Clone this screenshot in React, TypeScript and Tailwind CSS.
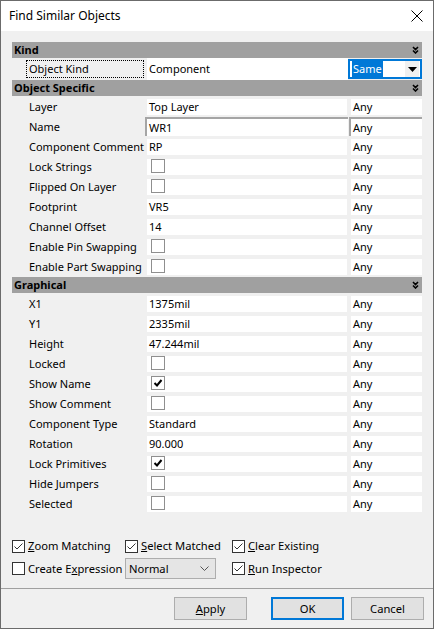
import React from 'react';

const font = { fontFamily: '"Noto Sans", "Open Sans", sans-serif' };

const Chevrons = () => (
  <svg width="7" height="8" viewBox="0 0 7 8" className="mr-[3px]">
    <path d="M1 1 L3.5 3.5 L6 1 M1 4.5 L3.5 7 L6 4.5" stroke="#000" strokeWidth="1.6" fill="none" />
  </svg>
);

const Header = ({ title, className = '' }: { title: string; className?: string }) => (
  <div className={`flex h-[16px] items-center justify-between bg-[#a0a0a0] pl-[2px] ${className}`}>
    <span className="text-[11px] font-bold leading-[16px] text-black">{title}</span>
    <Chevrons />
  </div>
);

const GridCheck = ({ checked }: { checked?: boolean }) => (
  <div className="ml-[2px] flex h-[14px] w-[14px] items-center justify-center border border-[#8f8f8f] bg-white">
    {checked && (
      <svg width="10" height="10" viewBox="0 0 10 10">
        <path d="M1.5 5 L4 7.5 L8.5 2" stroke="#000" strokeWidth="2" fill="none" />
      </svg>
    )}
  </div>
);

type Row = { label: string; value?: string; check?: boolean; checked?: boolean; sunken?: boolean };

const PropRow = ({ r }: { r: Row }) => {
  if (r.sunken) {
    return (
      <div className="flex h-[20px] pt-[1px] text-[11px] leading-[16px]">
        <div className="w-[133px] pl-[17px] pt-[2px]">{r.label}</div>
        <div className="flex h-[19px] w-[203px] items-center border-l-2 border-t-2 border-[#a5a5a5] bg-white pl-[2px]">{r.value}</div>
        <div className="ml-[1px] flex h-[19px] w-[73px] items-center border-l-2 border-t-2 border-[#a5a5a5] bg-white pl-[2px]">Any</div>
      </div>
    );
  }
  return (
    <div className="flex h-[20px] pt-[3px] pb-[1px] text-[11px] leading-[16px]">
      <div className="w-[135px] pl-[17px]">{r.label}</div>
      <div className="w-[200px] bg-white pl-[2px]">
        {r.check ? <GridCheck checked={r.checked} /> : r.value}
      </div>
      <div className="ml-[4px] w-[71px] bg-white pl-[2px]">Any</div>
    </div>
  );
};

const objectSpecific: Row[] = [
  { label: 'Layer', value: 'Top Layer' },
  { label: 'Name', value: 'WR1', sunken: true },
  { label: 'Component Comment', value: 'RP' },
  { label: 'Lock Strings', check: true },
  { label: 'Flipped On Layer', check: true },
  { label: 'Footprint', value: 'VR5' },
  { label: 'Channel Offset', value: '14' },
  { label: 'Enable Pin Swapping', check: true },
  { label: 'Enable Part Swapping', check: true },
];

const graphical: Row[] = [
  { label: 'X1', value: '1375mil' },
  { label: 'Y1', value: '2335mil' },
  { label: 'Height', value: '47.244mil' },
  { label: 'Locked', check: true },
  { label: 'Show Name', check: true, checked: true },
  { label: 'Show Comment', check: true },
  { label: 'Component Type', value: 'Standard' },
  { label: 'Rotation', value: '90.000' },
  { label: 'Lock Primitives', check: true, checked: true },
  { label: 'Hide Jumpers', check: true },
  { label: 'Selected', check: true },
];

const OptCheck = ({ checked, children }: { checked?: boolean; children: React.ReactNode }) => (
  <div className="flex items-center text-[11.2px] leading-[16px]">
    <div className="flex h-[13px] w-[13px] items-center justify-center border border-[#333] bg-white">
      {checked && (
        <svg width="11" height="11" viewBox="0 0 11 11">
          <path d="M1.5 5.5 L4 8 L9.5 2.5" stroke="#333" strokeWidth="1" fill="none" />
        </svg>
      )}
    </div>
    <span className="ml-[3px]">{children}</span>
  </div>
);

const Btn = ({ children, primary }: { children: React.ReactNode; primary?: boolean }) => (
  <button
    className={`flex h-[23px] w-[73px] items-center justify-center bg-[#e1e1e1] text-[11.2px] leading-[16px] text-black ${
      primary ? 'border-2 border-[#0078d7]' : 'border border-[#adadad]'
    }`}
  >
    {children}
  </button>
);

export default function App() {
  return (
    <div style={font} className="flex h-[629px] w-[434px] flex-col whitespace-nowrap border border-[#6b6b6b] bg-[#f0f0f0] text-black">
      {/* Title bar */}
      <div className="flex h-[30px] shrink-0 items-center justify-between bg-white pl-[8px] pr-[10px]">
        <span className="text-[12px]">Find Similar Objects</span>
        <svg width="12" height="12" viewBox="0 0 12 12">
          <path d="M0.5 0.5 L11.5 11.5 M11.5 0.5 L0.5 11.5" stroke="#000" strokeWidth="1" />
        </svg>
      </div>

      {/* Property grid */}
      <div className="ml-[11px] mt-[11px] w-[410px]">
        <Header title="Kind" />
        <div className="flex h-[22px] items-center text-[11px] leading-[16px]">
          <div className="ml-[14px] w-[118px] border border-dotted border-black pl-[2px]">Object Kind</div>
          <div className="ml-[3px] flex h-[22px] w-[201px] items-center bg-white pl-[2px]">Component</div>
          <div className="flex h-[20px] w-[74px] items-center border-2 border-[#0078d7] bg-white">
            <span className="ml-[2px] bg-[#0078d7] px-[1px] text-white">Same</span>
            <div className="ml-auto mr-[1px] flex h-[16px] w-[14px] items-center justify-center bg-[#f0f0f0]">
              <svg width="9" height="5" viewBox="0 0 9 5">
                <path d="M0 0 L9 0 L4.5 5 Z" fill="#000" />
              </svg>
            </div>
          </div>
        </div>
        <Header title="Object Specific" />
        {objectSpecific.map((r) => (
          <PropRow key={r.label} r={r} />
        ))}
        <Header title="Graphical" className="mt-[1px]" />
        {graphical.map((r) => (
          <PropRow key={r.label} r={r} />
        ))}
      </div>

      {/* Options */}
      <div className="ml-[11px] mt-[25px] flex flex-col gap-[4px]">
        <div className="flex">
          <div className="w-[113px]">
            <OptCheck checked><u>Z</u>oom Matching</OptCheck>
          </div>
          <div className="w-[107px]">
            <OptCheck checked><u>S</u>elect Matched</OptCheck>
          </div>
          <OptCheck checked><u>C</u>lear Existing</OptCheck>
        </div>
        <div className="flex items-center">
          <div className="w-[113px]">
            <OptCheck>Create E<u>x</u>pression</OptCheck>
          </div>
          <div className="w-[107px]">
            <div className="flex h-[21px] w-[91px] items-center justify-between border border-[#adadad] bg-[#e5e5e5] pl-[3px] pr-[6px] text-[11.2px] leading-[16px]">
              <span>Normal</span>
              <svg width="9" height="5" viewBox="0 0 9 5">
                <path d="M0.5 0.5 L4.5 4.5 L8.5 0.5" stroke="#555" strokeWidth="1" fill="none" />
              </svg>
            </div>
          </div>
          <OptCheck checked><u>R</u>un Inspector</OptCheck>
        </div>
      </div>

      {/* Buttons */}
      <div className="mt-auto flex h-[40px] items-start gap-[5px] border-t border-[#a0a0a0] pt-[8px] pl-[173px]">
        <Btn><u>A</u>pply</Btn>
        <div className="ml-[19px] flex gap-[7px]">
          <Btn primary>OK</Btn>
          <Btn>Cancel</Btn>
        </div>
      </div>
    </div>
  );
}
